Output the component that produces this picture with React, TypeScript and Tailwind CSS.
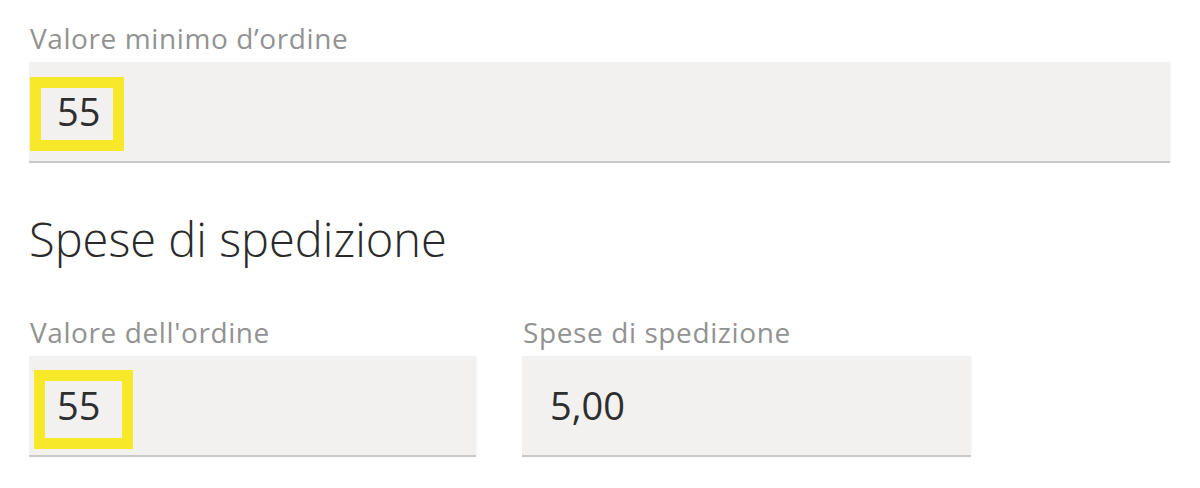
import React from "react";

// Field with grey fill and a bottom rule
type FieldProps = {
  label: string;
  value: string;
  width: string;
  mark?: string;
};

const Field = ({ label, value, width, mark }: FieldProps) => {
  return (
    <div className={`flex flex-col ${width}`}>
      <label className="text-[28px] leading-[35px] tracking-[0.6px] text-[#929292] mb-[6px] pl-[1px]">
        {label}
      </label>
      <div className="flex h-[101px] items-center border-b-2 border-[#c9c9c9] bg-[#f2f1f0] pl-[28px] shadow-[1px_0_2px_rgba(0,0,0,0.04)]">
        <span className="relative text-[38px] leading-[49px] text-[#2e2e2e]">
          {/* Yellow highlight drawn over the value */}
          {mark && (
            <span
              className={`pointer-events-none absolute border-[11px] border-[#f7e92a] ${mark}`}
            />
          )}
          <span className="relative">{value}</span>
        </span>
      </div>
    </div>
  );
};

export default function App() {
  return (
    <div
      className="h-[488px] w-[1200px] bg-white pl-[29px] pt-[21px]"
      style={{ fontFamily: '"Open Sans", "Noto Sans", sans-serif' }}
    >
      <Field
        label="Valore minimo d’ordine"
        value="55"
        width="w-[1141px]"
        mark="-left-[27px] -right-[24px] -top-[10px] -bottom-[15px]"
      />

      <h2 className="mt-[45px] text-[47px] font-light leading-[63px] text-[#2a2a2a]">
        Spese di spedizione
      </h2>

      <div className="mt-[44px] flex gap-[46px]">
        <Field
          label="Valore dell'ordine"
          value="55"
          width="w-[447px]"
          mark="-left-[23px] -right-[33px] -top-[11px] -bottom-[19px]"
        />
        <Field label="Spese di spedizione" value="5,00" width="w-[449px]" />
      </div>
    </div>
  );
}
